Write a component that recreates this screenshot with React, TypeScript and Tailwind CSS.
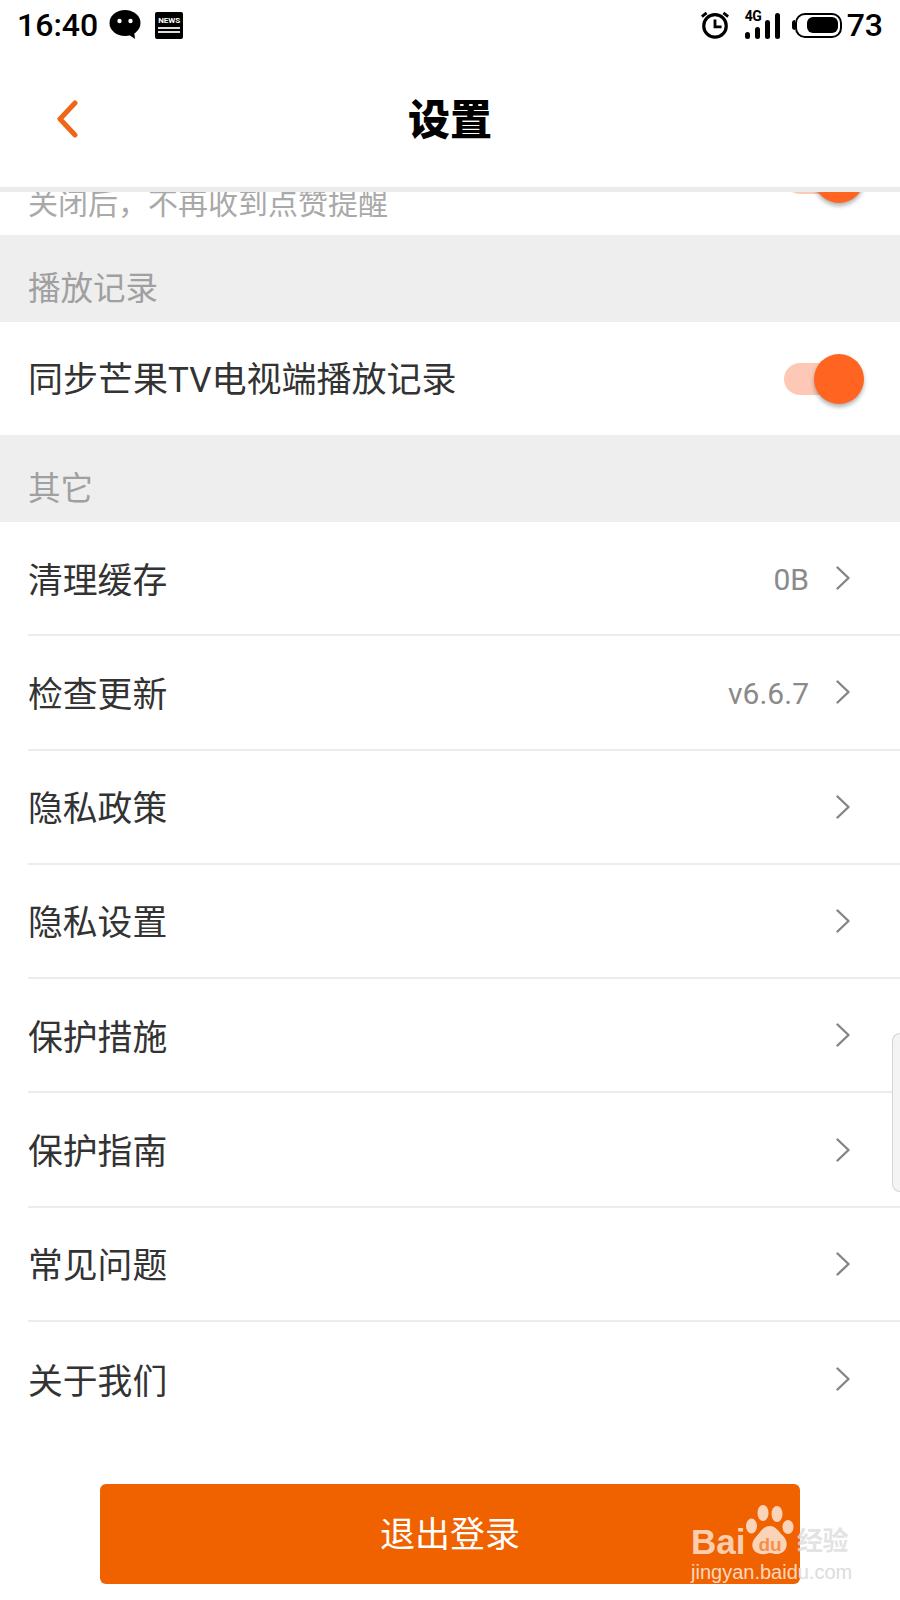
const rows = [
  { label: '清理缓存', value: '0B' },
  { label: '检查更新', value: 'v6.6.7' },
  { label: '隐私政策' },
  { label: '隐私设置' },
  { label: '保护措施' },
  { label: '保护指南' },
  { label: '常见问题' },
  { label: '关于我们' },
]

const cjk = "font-['Roboto','Noto_Sans_CJK_SC',sans-serif]"

function StatusIcons() {
  return (
    <div className="flex items-center">
      {/* alarm */}
      <svg width="30" height="30" viewBox="0 0 32 32" className="mr-[15px]" fill="none" stroke="#000">
        <circle cx="16" cy="17" r="12" strokeWidth="3.4" />
        <path d="M16 10v8h7" strokeWidth="3" />
        <path d="M2 7l5-4M30 7l-5-4" strokeWidth="3" />
      </svg>
      {/* signal */}
      <div className="relative w-[35px] h-[27px] mr-[12px]">
        <span className="absolute left-0 -top-[3px] text-[14px] font-bold leading-[14px] tracking-[-0.5px] font-['Roboto',sans-serif]">4G</span>
        <div className="absolute inset-0 flex items-end gap-[5px]">
          <div className="w-[5px] h-[7px] rounded-full bg-black" />
          <div className="w-[5px] h-[12px] rounded-sm bg-black" />
          <div className="w-[5px] h-[19px] rounded-sm bg-black" />
          <div className="w-[5px] h-[26px] rounded-sm bg-black" />
        </div>
      </div>
      {/* battery */}
      <div className="w-[3px] h-[10px] bg-black rounded-l-full" />
      <div className="w-[47px] h-[25px] border-[2.5px] border-black rounded-[10px] flex justify-end items-center pr-[2px] mr-[5px]">
        <div className="w-[31px] h-[16px] bg-black rounded-[6px]" />
      </div>
      <span className="text-[32px] leading-none font-medium">73</span>
    </div>
  )
}

function Toggle() {
  return (
    <div className="flex items-center w-[80px] h-[50px] relative shrink-0">
      <div className="w-[60px] h-[32px] rounded-full bg-[#fdc9b6]" />
      <div className="absolute right-0 top-0 w-[50px] h-[50px] rounded-full bg-[#ff6420] shadow-[0_3px_4px_rgba(0,0,0,0.3)]" />
    </div>
  )
}

function Chevron() {
  return (
    <svg width="14" height="24" viewBox="0 0 14 24" fill="none" className="mr-[6px]">
      <path d="M1.5 1.5L12.5 12 1.5 22.5" stroke="#858585" strokeWidth="2.4" strokeLinecap="round" strokeLinejoin="round" />
    </svg>
  )
}

export default function App() {
  return (
    <div className={`relative w-[900px] h-[1600px] overflow-hidden bg-white text-[#333] ${cjk}`}>
      {/* status bar */}
      <div className="flex items-center justify-between h-[50px] pl-[17px] pr-[17px] text-black">
        <div className="flex items-center">
          <span className="text-[32px] leading-none font-medium">16:40</span>
          <svg width="32" height="30" viewBox="0 0 32 30" className="ml-[11px]">
            <ellipse cx="16" cy="13" rx="15.5" ry="13" fill="#000" />
            <path d="M19 24l7 5-1-8z" fill="#000" />
            <circle cx="10.5" cy="11" r="2.2" fill="#fff" />
            <circle cx="21.5" cy="11" r="2.2" fill="#fff" />
          </svg>
          <div className="ml-[14px] w-[28px] h-[27px] bg-black rounded-[2px] flex flex-col items-center pt-[4px]">
            <span className="text-[8px] leading-[9px] font-bold text-white">NEWS</span>
            <div className="w-[22px] h-[2px] bg-[#ddd] mt-[2px]" />
            <div className="w-[22px] h-[2px] bg-[#ddd] mt-[2px]" />
          </div>
        </div>
        <StatusIcons />
      </div>

      {/* title bar */}
      <div className="relative flex items-center justify-center h-[137px] pt-[4px]">
        <svg width="24" height="38" viewBox="0 0 24 38" fill="none" className="absolute left-[55px] top-[50px]">
          <path d="M20 3L5 19l15 16" stroke="#ee6616" strokeWidth="5" strokeLinecap="round" strokeLinejoin="round" />
        </svg>
        <h1 className="text-[42px] font-black leading-none text-black">设置</h1>
      </div>
      <div className="h-[5px] bg-[#ececec]" />

      {/* row scrolled under the title bar */}
      <div className="flex justify-between h-[43px] overflow-hidden pl-[28px] pr-[36px]">
        <span className="text-[30px] leading-[30px] -mt-[3px] text-[#a9a9a9]">关闭后，不再收到点赞提醒</span>
        <div className="-mt-[39px]">
          <Toggle />
        </div>
      </div>

      <div className="flex items-end h-[87px] pl-[28px] pb-[11px] bg-[#eeeeee] text-[32.5px] leading-[44px] text-[#a0a0a0]">播放记录</div>
      <div className="flex items-center justify-between h-[113px] pl-[28px] pr-[36px]">
        <span className="text-[35px] pt-[6px]">同步芒果TV电视端播放记录</span>
        <Toggle />
      </div>
      <div className="flex items-end h-[87px] pl-[28px] pb-[11px] bg-[#eeeeee] text-[32.5px] leading-[44px] text-[#a0a0a0]">其它</div>

      {/* list */}
      <div className="pl-[28px]">
        {rows.map((row, i) => (
          <div
            key={row.label}
            className={`flex items-center justify-between h-[114.3px] pr-[44px] ${i < rows.length - 1 ? 'border-b-2 border-[#ececec]' : ''}`}
          >
            <span className="text-[34.8px] pt-[5px]">{row.label}</span>
            <div className="flex items-center">
              {row.value && <span className="text-[30px] text-[#8a8a8a] mr-[27px] pt-[2px]">{row.value}</span>}
              <Chevron />
            </div>
          </div>
        ))}
      </div>

      <div className="flex justify-center mt-[48px]">
        <button className="w-[700px] h-[100px] pt-[4px] rounded-[6px] bg-[#f06200] text-white text-[35px]">退出登录</button>
      </div>

      {/* side handle */}
      <div className="absolute right-0 top-[1033px] w-[8px] h-[159px] rounded-l-[8px] border border-r-0 border-[#d4d4d4] bg-[#f4f4f4]" />

      {/* watermark */}
      <div className="absolute left-[691px] top-[1503px] w-[175px] h-[82px] pointer-events-none font-['Liberation_Sans','Noto_Sans_CJK_SC',sans-serif]">
        <span className="absolute left-0 top-[20px] text-[35px] leading-[38px] font-bold text-white/70">Bai</span>
        <svg width="50" height="54" viewBox="0 0 50 54" className="absolute left-[54px] top-[1px]">
          <g fill="#fff" fillOpacity="0.72">
            <ellipse cx="18" cy="9" rx="5.5" ry="8" />
            <ellipse cx="32" cy="10" rx="5.5" ry="8" />
            <ellipse cx="6.5" cy="22" rx="5.5" ry="7.5" />
            <ellipse cx="43" cy="23" rx="5.5" ry="7" />
            <path d="M25 22c6 0 9 6 14 11 5 6 3 16-6 17-4 .4-5-1-8-1-3 0-5 2-9 1-9-1-11-10-6-16 5-5 8-12 15-12z" />
          </g>
          <text x="25" y="47" textAnchor="middle" fontSize="19" fontWeight="700" fill="#f06200" fillOpacity="0.6" fontFamily="Liberation Sans">du</text>
        </svg>
        <span className="absolute left-[106px] top-[23px] text-[26px] leading-[30px] font-bold tracking-[-0.5px] text-[#dcdcdc]/80">经验</span>
        <span className="absolute left-0 top-[57px] text-[20px] leading-[24px] text-white/75 whitespace-nowrap">
          jingyan.baid<span className="text-[#dcdcdc]">u.com</span>
        </span>
      </div>
    </div>
  )
}
